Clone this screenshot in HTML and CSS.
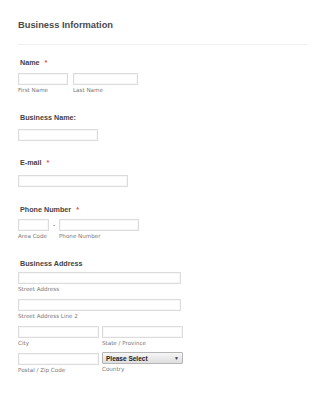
FILE: index.html
```html
<!DOCTYPE html>
<html lang="en">
<head>
    <meta charset="UTF-8">
    <meta name="viewport" content="width=device-width, initial-scale=1.0">
    <title>Business Information</title>
    <link rel="stylesheet" href="styles.css">
</head>
<body>
    <form class="form-container">
        <h2 class="form-title">Business Information</h2>
        <div class="divider"></div>

        <div class="field field-name">
            <label class="field-label">Name <span class="required">*</span></label>
            <div class="row">
                <div class="sub">
                    <input type="text" class="input w-first">
                    <span class="sub-label">First Name</span>
                </div>
                <div class="sub">
                    <input type="text" class="input w-last">
                    <span class="sub-label">Last Name</span>
                </div>
            </div>
        </div>

        <div class="field field-business">
            <label class="field-label">Business Name:</label>
            <input type="text" class="input w-business">
        </div>

        <div class="field field-email">
            <label class="field-label">E-mail <span class="required">*</span></label>
            <input type="email" class="input w-email">
        </div>

        <div class="field field-phone">
            <label class="field-label">Phone Number <span class="required">*</span></label>
            <div class="row phone-row">
                <div class="sub">
                    <input type="text" class="input w-area">
                    <span class="sub-label">Area Code</span>
                </div>
                <span class="dash">-</span>
                <div class="sub">
                    <input type="text" class="input w-phone">
                    <span class="sub-label">Phone Number</span>
                </div>
            </div>
        </div>

        <div class="field field-address">
            <label class="field-label">Business Address</label>
            <div class="address">
                <div class="sub">
                    <input type="text" class="input w-full">
                    <span class="sub-label">Street Address</span>
                </div>
                <div class="sub">
                    <input type="text" class="input w-full">
                    <span class="sub-label">Street Address Line 2</span>
                </div>
                <div class="row address-row">
                    <div class="sub">
                        <input type="text" class="input w-half">
                        <span class="sub-label">City</span>
                    </div>
                    <div class="sub">
                        <input type="text" class="input w-half">
                        <span class="sub-label">State / Province</span>
                    </div>
                </div>
                <div class="row address-row">
                    <div class="sub">
                        <input type="text" class="input w-half">
                        <span class="sub-label">Postal / Zip Code</span>
                    </div>
                    <div class="sub country">
                        <div class="select w-half">
                            <span>Please Select</span>
                            <span class="arrow">&#9660;</span>
                        </div>
                        <span class="sub-label">Country</span>
                    </div>
                </div>
            </div>
        </div>
    </form>
</body>
</html>
```

FILE: styles.css
```css
* {
    margin: 0;
    padding: 0;
    box-sizing: border-box;
}

body {
    font-family: "Liberation Sans", Arial, sans-serif;
    background-color: #ffffff;
}

.form-container {
    padding: 18px 18px 0 18px;
    width: 325px;
}

.form-title {
    font-size: 9.3px;
    line-height: 14px;
    font-weight: bold;
    color: #4a4a4a;
}

.divider {
    width: 289px;
    height: 1px;
    background-color: #eeeeee;
    margin-top: 12px;
}

.field {
    display: flex;
    flex-direction: column;
    align-items: flex-start;
}

.field-label {
    font-size: 7.2px;
    line-height: 10px;
    font-weight: bold;
    color: #444;
    padding-left: 2px;
    margin-bottom: 6px;
}

.required {
    color: #e74c3c;
    margin-left: 3px;
}

.field-name { margin-top: 13px; }
.field-name .field-label { margin-bottom: 5px; }
.field-business { margin-top: 19px; }
.field-email { margin-top: 17px; }
.field-email .field-label { margin-bottom: 7px; }
.field-phone { margin-top: 18px; }
.field-phone .field-label { margin-bottom: 4px; }
.field-address { margin-top: 19px; }
.field-address .field-label { margin-bottom: 3px; }

.row {
    display: flex;
    gap: 5px;
}

.sub {
    display: flex;
    flex-direction: column;
}

.input {
    height: 12px;
    border: 1px solid #dcdcdc;
    background-color: #fff;
    box-shadow: inset 0 0 0 1px #f7f7f7;
}

.sub-label {
    font-family: "DejaVu Sans", Verdana, sans-serif;
    font-size: 5.6px;
    line-height: 8px;
    color: #777;
    padding-top: 1px;
}

.w-first { width: 50px; }
.w-last { width: 65px; }
.w-business { width: 80px; }
.w-email { width: 110px; }
.w-area { width: 31px; }
.w-phone { width: 80px; }
.w-full { width: 163px; }
.w-half { width: 81px; }

.dash {
    font-size: 8px;
    line-height: 12px;
    color: #777;
    width: 6px;
    text-align: center;
}

.phone-row { gap: 2px; }

.address {
    display: flex;
    flex-direction: column;
    gap: 6px;
}

.address-row { gap: 3px; }

.country {
    margin-top: -1px;
}

.select {
    height: 12px;
    border: 1px solid #b5b5b5;
    border-radius: 1px;
    background: linear-gradient(#f6f6f6, #dedede);
    display: flex;
    justify-content: space-between;
    align-items: center;
    padding: 0 3px;
    font-size: 6.5px;
    font-weight: bold;
    color: #222;
}

.arrow {
    font-size: 5px;
    color: #333;
}
```
